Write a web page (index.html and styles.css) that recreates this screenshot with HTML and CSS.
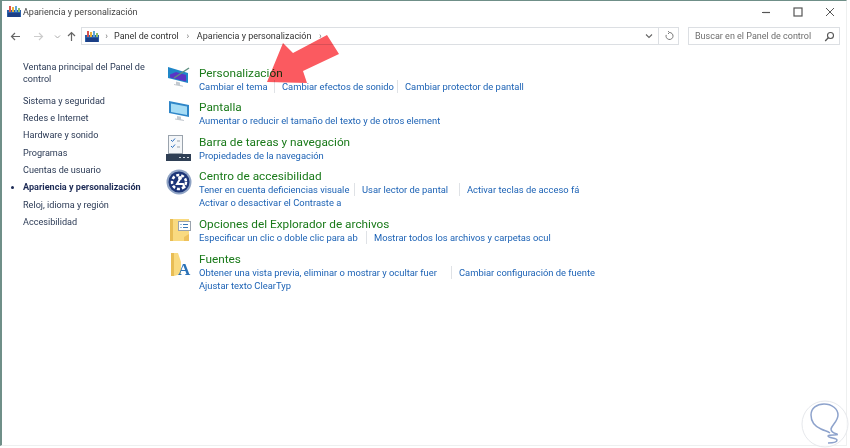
FILE: index.html
```html
<!DOCTYPE html>
<html lang="es">
<head>
<meta charset="utf-8">
<title>Apariencia y personalización</title>
<link rel="stylesheet" href="styles.css">
</head>
<body>
<div class="window">
  <header class="titlebar">
    <svg class="folder-ico" width="14" height="13" viewBox="0 0 14 13"><rect x="0" y="5" width="14" height="7" fill="#2b5fa8"/><rect x="1" y="8" width="12" height="4" fill="#1c3f86"/><rect x="2" y="1" width="2" height="6" fill="#d9534f"/><rect x="5" y="2" width="2" height="5" fill="#e8b23a"/><rect x="8" y="1" width="2" height="6" fill="#5fa8d8"/><rect x="11" y="3" width="2" height="4" fill="#8fc06b"/></svg>
    <span class="title">Apariencia y personalización</span>
    <div class="winbtns">
      <svg width="10" height="10" viewBox="0 0 10 10"><path d="M1 5.500h8" stroke="#555" stroke-width="1.200"/></svg>
      <svg width="10" height="10" viewBox="0 0 10 10"><rect x="1" y="1" width="8" height="8" fill="none" stroke="#555" stroke-width="1.200"/></svg>
      <svg width="10" height="10" viewBox="0 0 10 10"><path d="M1 1l8 8M9 1l-8 8" stroke="#555" stroke-width="1"/></svg>
    </div>
  </header>
  <nav class="navbar">
    <div class="navbtns">
      <svg class="btn-back" width="11" height="11" viewBox="0 0 11 11"><path d="M10 5.500H1.500M5 2L1.500 5.500 5 9" fill="none" stroke="#666" stroke-width="1.200"/></svg>
      <svg class="btn-fwd" width="11" height="11" viewBox="0 0 11 11"><path d="M1 5.500h8.500M6 2l3.500 3.500L6 9" fill="none" stroke="#ccc" stroke-width="1.200"/></svg>
      <svg class="btn-drop" width="7" height="11" viewBox="0 0 7 11"><path d="M1 4.500l2.500 2.500L6 4.500" fill="none" stroke="#aaa" stroke-width="1"/></svg>
      <svg class="btn-up" width="11" height="11" viewBox="0 0 11 11"><path d="M5.500 10V1.500M2 5l3.500-3.500L9 5" fill="none" stroke="#666" stroke-width="1.200"/></svg>
    </div>
    <div class="address">
      <svg class="folder-ico" width="14" height="13" viewBox="0 0 14 13"><rect x="0" y="5" width="14" height="7" fill="#2b5fa8"/><rect x="1" y="8" width="12" height="4" fill="#1c3f86"/><rect x="2" y="1" width="2" height="6" fill="#d9534f"/><rect x="5" y="2" width="2" height="5" fill="#e8b23a"/><rect x="8" y="1" width="2" height="6" fill="#5fa8d8"/><rect x="11" y="3" width="2" height="4" fill="#8fc06b"/></svg>
      <span class="crumb-sep first">›</span><span class="crumb">Panel de control</span>
      <span class="crumb-sep">›</span><span class="crumb">Apariencia y personalización</span>
      <span class="crumb-sep">›</span>
      <span class="addr-end">
        <svg width="8" height="8" viewBox="0 0 8 8"><path d="M1 2.500l3 3 3-3" fill="none" stroke="#666" stroke-width="1.100"/></svg>
        <span class="addr-div"></span>
        <svg width="10" height="10" viewBox="0 0 10 10"><path d="M5.500 1.500a3.500 3.500 0 1 1-3.300 2.400M5.500 1.500L4 .2M5.500 1.500L4 3" fill="none" stroke="#777" stroke-width="1"/></svg>
      </span>
    </div>
    <div class="search">
      <span>Buscar en el Panel de control</span>
      <svg width="11" height="11" viewBox="0 0 11 11"><circle cx="6.500" cy="4.500" r="3" fill="none" stroke="#555" stroke-width="1.100"/><path d="M4.300 6.800L1.200 10" stroke="#555" stroke-width="1.300"/></svg>
    </div>
  </nav>
  <div class="main">
    <aside class="sidebar">
      <a class="side-home">Ventana principal del Panel de control</a>
      <ul class="side-list">
        <li>Sistema y seguridad</li>
        <li>Redes e Internet</li>
        <li>Hardware y sonido</li>
        <li>Programas</li>
        <li>Cuentas de usuario</li>
        <li class="current">Apariencia y personalización</li>
        <li>Reloj, idioma y región</li>
        <li>Accesibilidad</li>
      </ul>
    </aside>
    <section class="content">
      <article class="cat cat-1">
        <svg class="cat-ico" width="26" height="26" viewBox="0 0 26 26"><path d="M2 1l20 6v10L2 12z" fill="#1f86c8"/><path d="M4 8.500l6-2.500 10 3v6.500L4 11.500z" fill="#5b35c5"/><path d="M8 12L23 2" stroke="#5f8f80" stroke-width="1.500"/><path d="M10 15.500l4 1v2.500l3 .7v1l-9-1.700v-1l2 .4z" fill="#c3c9cf"/></svg>
        <div class="cat-body">
          <h2>Personalización</h2>
          <div class="links"><a class="l-tema">Cambiar el tema</a><a class="l-sonido">Cambiar efectos de sonido</a><a>Cambiar protector de pantall</a></div>
        </div>
      </article>
      <article class="cat cat-2">
        <svg class="cat-ico" width="26" height="26" viewBox="0 0 26 26"><path d="M3 1l20 4v12L3 13z" fill="#2f86c8"/><path d="M5 3.500l16 3v8.500L5 12z" fill="#a6dcf5"/><path d="M11 16l4 .8v2.500l3 .6v1l-9-1.500v-1l2 .4z" fill="#c3c9cf"/></svg>
        <div class="cat-body">
          <h2>Pantalla</h2>
          <div class="links"><a>Aumentar o reducir el tamaño del texto y de otros element</a></div>
        </div>
      </article>
      <article class="cat cat-3">
        <svg class="cat-ico" width="26" height="26" viewBox="0 0 26 26"><rect x="2.500" y=".5" width="14" height="18" fill="#f4f6f8" stroke="#9aa3ad"/><path d="M5 5l1.500 1.500L9 3.500M5 11l1.500 1.500L9 9.500" fill="none" stroke="#2a6fc0"/><path d="M11 6h3M11 12h3" stroke="#9aa3ad"/><rect x="0" y="19" width="25" height="7" fill="#2f3f55"/><path d="M13 22.500h2M17 22.500h2M21 22.500h2" stroke="#cfd6de"/></svg>
        <div class="cat-body">
          <h2>Barra de tareas y navegación</h2>
          <div class="links"><a>Propiedades de la navegación</a></div>
        </div>
      </article>
      <article class="cat cat-4">
        <svg class="cat-ico" width="26" height="26" viewBox="0 0 26 26"><circle cx="13" cy="13" r="12.500" fill="#8fa3c4"/><circle cx="13" cy="13" r="10.500" fill="#1c3578"/><circle cx="13" cy="13" r="7" fill="none" stroke="#fff" stroke-width="2.500" stroke-dasharray="3 2"/><circle cx="14" cy="9" r="2" fill="#fff"/><path d="M14 10l-3 5h6l2 4" stroke="#fff" stroke-width="2" fill="none"/></svg>
        <div class="cat-body">
          <h2>Centro de accesibilidad</h2>
          <div class="links"><a class="l-visual">Tener en cuenta deficiencias visuale</a><a class="l-lector">Usar lector de pantal</a><a class="l-acc">Activar teclas de acceso fá</a></div>
          <div class="links"><a>Activar o desactivar el Contraste a</a></div>
        </div>
      </article>
      <article class="cat cat-5">
        <svg class="cat-ico" width="26" height="26" viewBox="0 0 26 26"><path d="M4 2h19v22H4z" fill="#f9da80"/><path d="M4 2h3v22H4z" fill="#e8bd55"/><path d="M23 24h-5v-4l5-3z" fill="#eec15c"/><rect x="12.500" y="4.500" width="12" height="9" fill="#fff" stroke="#9aa3ad"/><path d="M14.500 7.500h1M14.500 10.500h1M17 7.500h5M17 10.500h5" stroke="#3b78b8"/></svg>
        <div class="cat-body">
          <h2>Opciones del Explorador de archivos</h2>
          <div class="links"><a class="l-clic">Especificar un clic o doble clic para ab</a><a>Mostrar todos los archivos y carpetas ocul</a></div>
        </div>
      </article>
      <article class="cat cat-6">
        <svg class="cat-ico" width="26" height="26" viewBox="0 0 26 26"><path d="M5 1h7l3 9v12l-7 2H5z" fill="#f9da80"/><path d="M5 1h3v23H5z" fill="#e8bd55"/><text x="12" y="23" class="font-a">A</text></svg>
        <div class="cat-body">
          <h2>Fuentes</h2>
          <div class="links"><a class="l-fuer">Obtener una vista previa, eliminar o mostrar y ocultar fuer</a><a class="l-conf">Cambiar configuración de fuente</a></div>
          <div class="links"><a>Ajustar texto ClearTyp</a></div>
        </div>
      </article>
    </section>
  </div>
</div>
<svg class="arrow" width="85" height="65" viewBox="0 0 85 65"><polygon points="7,52 23,13 33,23 67,5 79,24 43,41 47,53" fill="#fb5a60"/></svg>
<svg class="watermark" width="48" height="48" viewBox="0 0 48 48"><circle cx="24" cy="24" r="23" fill="#fff" fill-opacity=".7" stroke="#e6e8ec"/><path d="M29 33C26 31 24 31 20 29 13 26 10 21 10 15 10 8 16 4 23 4 31 4 37 9 37 15 37 21 31 25 30 29 30 32 32 33 36 34 38 36 28 34 27 36 27 38 36 38 36 40 36 43 30 43 27 43" fill="none" stroke="#8ea3cc" stroke-width="1.500"/></svg>
</body>
</html>
```

FILE: styles.css
```css
* { box-sizing: border-box; }
html, body { margin: 0; padding: 0; }
body {
  width: 850px;
  height: 448px;
  overflow: hidden;
  position: relative;
  background: #fff;
  font-family: Roboto, sans-serif;
  color: #333;
}
.window {
  width: 847px;
  height: 446px;
  border-style: solid;
  border-color: #6f8f88 #eef0f0 #eef0f0 #6f8f88;
  border-width: 1px 1px 1px 2px;
  background: #fff;
  display: flex;
  flex-direction: column;
}
.titlebar {
  height: 21px;
  display: flex;
  align-items: center;
  padding: 0 0 0 5px;
  flex: none;
}
.title {
  font-size: 9px;
  color: #444;
  margin-left: 2px;
}
.winbtns {
  margin-left: auto;
  display: flex;
  gap: 22px;
  padding-right: 11px;
}
.navbar {
  height: 18px;
  margin-top: 5px;
  display: flex;
  align-items: center;
  flex: none;
}
.navbtns {
  display: flex;
  align-items: center;
  width: 79px;
  padding-left: 8px;
}
.btn-fwd { margin-left: 12px; }
.btn-drop { margin-left: 10px; }
.btn-up { margin-left: 5px; }
.address {
  width: 598px;
  height: 18px;
  border: 1px solid #dcdfe3;
  display: flex;
  align-items: center;
  font-size: 9px;
  color: #333;
  padding-left: 3px;
}
.crumb { white-space: nowrap; }
.crumb-sep {
  color: #777;
  width: 18px;
  text-align: center;
}
.crumb-sep.first { width: 15px; }
.addr-end {
  margin-left: auto;
  display: flex;
  align-items: center;
  gap: 5px;
  padding-right: 4px;
}
.addr-div {
  width: 1px;
  height: 16px;
  background: #dcdfe3;
}
.search {
  width: 152px;
  height: 18px;
  margin-left: 9px;
  border: 1px solid #dcdfe3;
  display: flex;
  align-items: center;
  justify-content: space-between;
  font-size: 9px;
  color: #6d6d6d;
  padding: 0 4px 0 6px;
}
.main {
  display: flex;
  flex: 1;
  min-height: 0;
}
.sidebar {
  width: 167px;
  padding: 16px 0 0 21px;
  font-size: 9.1px;
  color: #2b3a55;
  flex: none;
}
.side-home {
  display: block;
  width: 128px;
  line-height: 12px;
}
.side-list {
  list-style: none;
  margin: 7.500px 0 0;
  padding: 0;
}
.side-list li {
  height: 17.4px;
  line-height: 17.4px;
  position: relative;
  white-space: nowrap;
}
.side-list .current {
  font-weight: 700;
  color: #1c2a55;
}
.side-list .current::before {
  content: "";
  position: absolute;
  left: -12px;
  top: 7px;
  width: 3px;
  height: 3px;
  border-radius: 50%;
  background: #1c2a55;
}
.content {
  flex: 1;
  padding-top: 21px;
}
.cat {
  display: flex;
  align-items: flex-start;
}
.cat-ico {
  flex: none;
  margin-left: -3px;
}
.cat-body {
  margin-left: 7px;
}
.cat h2 {
  margin: 0;
  font-size: 11.800px;
  line-height: 14px;
  font-weight: 400;
  color: #1a7a1a;
  white-space: nowrap;
}
.links {
  display: flex;
  font-size: 9.400px;
  line-height: 13px;
  color: #1c62b5;
  white-space: nowrap;
}
.links a {
  padding-right: 4px;
  margin-right: 7px;
  border-right: 1px solid #dfe2e6;
}
.links a:last-child {
  border-right: 0;
  padding-right: 0;
  margin-right: 0;
}
.links .l-tema { width: 76px; }
.links .l-sonido { width: 116px; }
.links .l-visual { width: 156px; }
.links .l-lector { width: 98px; }
.links .l-clic { width: 168px; }
.links .l-fuer { width: 253px; }
.links .l-acc { width: 123px; border-right: 1px solid #dfe2e6; }
.links .l-conf { width: 142px; border-right: 1px solid #dfe2e6; }
.cat-2 { margin-top: 7px; }
.cat-3 { margin-top: 8px; }
.cat-4 { margin-top: 7px; }
.cat-5 { margin-top: 8px; }
.cat-6 { margin-top: 8px; }
.font-a {
  font-family: "Liberation Serif", serif;
  font-size: 17px;
  font-weight: 700;
  fill: #2a72b8;
}
.arrow {
  position: absolute;
  left: 260px;
  top: 30px;
  mix-blend-mode: multiply;
}
.watermark {
  position: absolute;
  right: 1px;
  bottom: 0;
}
```
